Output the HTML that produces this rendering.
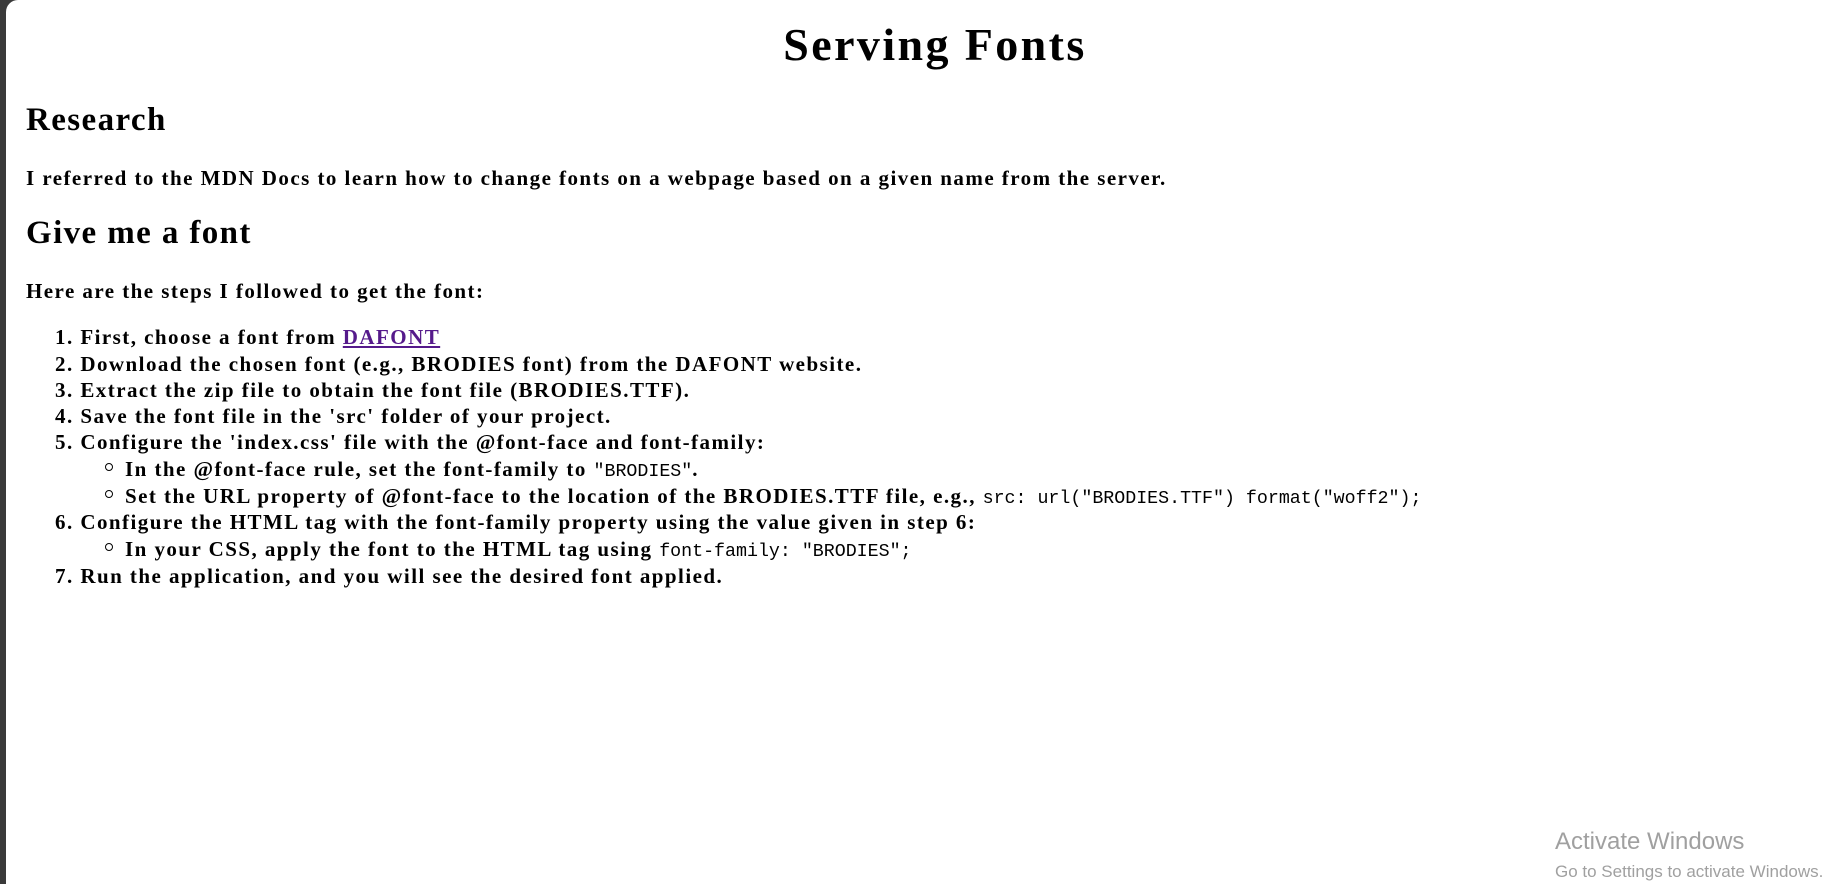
<!DOCTYPE html>
<html><head><meta charset="utf-8"><style>
html,body{margin:0;padding:0;background:#fff;width:1848px;height:884px;overflow:hidden;}
body{font-family:"Liberation Serif",serif;font-weight:bold;color:#000;position:relative;}
.edge{position:absolute;left:0;top:0;width:6px;height:884px;background:#3a3a3a;}
.corner{position:absolute;left:6px;top:0;width:12px;height:12px;border-top-left-radius:12px;box-shadow:-3px -3px 0 3px #3a3a3a;}
.t{position:absolute;white-space:nowrap;line-height:1;}
h1{position:absolute;left:0;width:1870px;text-align:center;top:22px;margin:0;font-size:46px;line-height:1;letter-spacing:2.4px;}
.h2{font-size:33px;letter-spacing:1.4px;}
.p{font-size:21px;letter-spacing:1.45px;}
code{font-family:"Liberation Mono",monospace;font-weight:normal;font-size:18.3px;letter-spacing:0;}
a{color:#551a8b;}
.bul{position:absolute;width:6px;height:6px;border:1.5px solid #000;border-radius:50%;}
.win1{position:absolute;left:1555px;top:828px;font-family:"Liberation Sans",sans-serif;font-weight:normal;color:#a0a0a0;font-size:24px;}
.win2{position:absolute;left:1555px;top:862px;font-family:"Liberation Sans",sans-serif;font-weight:normal;color:#a0a0a0;font-size:17px;}
</style></head><body>
<div class="edge"></div><div class="corner"></div>
<h1>Serving Fonts</h1>
<div class="t h2" style="left:26px;top:104px">Research</div>
<div class="t p" style="left:26px;top:168px">I referred to the MDN Docs to learn how to change fonts on a webpage based on a given name from the server.</div>
<div class="t h2" style="left:26px;top:217px">Give me a font</div>
<div class="t p" style="left:26px;top:281px">Here are the steps I followed to get the font:</div>
<div class="t p" style="left:55px;top:327px">1. First, choose a font from <a href="#">DAFONT</a></div>
<div class="t p" style="left:55px;top:354px">2. Download the chosen font (e.g., BRODIES font) from the DAFONT website.</div>
<div class="t p" style="left:55px;top:380px">3. Extract the zip file to obtain the font file (BRODIES.TTF).</div>
<div class="t p" style="left:55px;top:406px">4. Save the font file in the 'src' folder of your project.</div>
<div class="t p" style="left:55px;top:432px">5. Configure the 'index.css' file with the @font-face and font-family:</div>
<div class="bul" style="left:105px;top:463px"></div>
<div class="t p" style="left:125px;top:459px">In the @font-face rule, set the font-family to <code>"BRODIES"</code>.</div>
<div class="bul" style="left:105px;top:490px"></div>
<div class="t p" style="left:125px;top:486px">Set the URL property of @font-face to the location of the BRODIES.TTF file, e.g., <code>src: url("BRODIES.TTF") format("woff2");</code></div>
<div class="t p" style="left:55px;top:512px">6. Configure the HTML tag with the font-family property using the value given in step 6:</div>
<div class="bul" style="left:105px;top:543px"></div>
<div class="t p" style="left:125px;top:539px">In your CSS, apply the font to the HTML tag using <code>font-family: "BRODIES";</code></div>
<div class="t p" style="left:55px;top:566px">7. Run the application, and you will see the desired font applied.</div>
<div class="win1">Activate Windows</div>
<div class="win2">Go to Settings to activate Windows.</div>
</body></html>
